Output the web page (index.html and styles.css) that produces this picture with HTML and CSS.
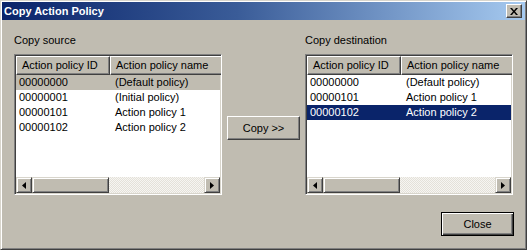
FILE: index.html
```html
<!DOCTYPE html>
<html lang="en">
<head>
  <meta charset="UTF-8" />
  <title>Copy Action Policy</title>
  <link rel="stylesheet" href="styles.css">
</head>
<body>
  <div class="window">
    <div class="titlebar">
      <span class="title">Copy Action Policy</span>
      <button class="title-close" aria-label="Close">
        <svg width="8" height="7" viewBox="0 0 8 7"><path d="M0 0h2l2 2.5 2-2.5h2l-3 3.5 3 3.5h-2l-2-2.5-2 2.5h-2l3-3.5z" fill="#000"/></svg>
      </button>
    </div>

    <div class="dialog-body">
      <div class="panes">
        <div class="pane-label">Copy source</div>
        <div></div>
        <div class="pane-label">Copy destination</div>

        <div class="listview">
          <div class="lv-header">
            <div class="lv-head lv-col-id">Action policy ID</div>
            <div class="lv-head lv-col-name">Action policy name</div>
          </div>
          <div class="lv-rows">
            <div class="lv-row inactive-sel"><span class="lv-col-id">00000000</span><span class="lv-col-name">(Default policy)</span></div>
            <div class="lv-row"><span class="lv-col-id">00000001</span><span class="lv-col-name">(Initial policy)</span></div>
            <div class="lv-row"><span class="lv-col-id">00000101</span><span class="lv-col-name">Action policy 1</span></div>
            <div class="lv-row"><span class="lv-col-id">00000102</span><span class="lv-col-name">Action policy 2</span></div>
          </div>
          <div class="hscroll">
            <div class="sb-btn"><svg width="4" height="7" viewBox="0 0 4 7"><path d="M4 0v7L0 3.5z" fill="#000"/></svg></div>
            <div class="sb-thumb"></div>
            <div class="sb-track"></div>
            <div class="sb-btn"><svg width="4" height="7" viewBox="0 0 4 7"><path d="M0 0v7l4-3.5z" fill="#000"/></svg></div>
          </div>
        </div>

        <button class="btn btn-copy">Copy &gt;&gt;</button>

        <div class="listview">
          <div class="lv-header">
            <div class="lv-head lv-col-id">Action policy ID</div>
            <div class="lv-head lv-col-name">Action policy name</div>
          </div>
          <div class="lv-rows">
            <div class="lv-row"><span class="lv-col-id">00000000</span><span class="lv-col-name">(Default policy)</span></div>
            <div class="lv-row"><span class="lv-col-id">00000101</span><span class="lv-col-name">Action policy 1</span></div>
            <div class="lv-row selected"><span class="lv-col-id">00000102</span><span class="lv-col-name">Action policy 2</span></div>
          </div>
          <div class="hscroll">
            <div class="sb-btn"><svg width="4" height="7" viewBox="0 0 4 7"><path d="M4 0v7L0 3.5z" fill="#000"/></svg></div>
            <div class="sb-thumb"></div>
            <div class="sb-track"></div>
            <div class="sb-btn"><svg width="4" height="7" viewBox="0 0 4 7"><path d="M0 0v7l4-3.5z" fill="#000"/></svg></div>
          </div>
        </div>
      </div>

      <div class="footer">
        <button class="btn btn-default">Close</button>
      </div>
    </div>
  </div>
</body>
</html>
```

FILE: styles.css
```css
* {
  box-sizing: border-box;
}

body {
  margin: 0;
  background: #c0bcb1;
  font-family: "Liberation Sans", Arial, sans-serif;
  font-size: 11px;
  color: #000;
}

.window {
  width: 527px;
  height: 250px;
  padding: 1px;
  background: #c0bcb1;
  border: 1px solid;
  border-color: #d8d5cc #404040 #404040 #d8d5cc;
  box-shadow: inset 1px 1px #fff, inset -1px -1px #808080;
  display: flex;
  flex-direction: column;
}

/* title bar */
.titlebar {
  height: 18px;
  display: flex;
  align-items: center;
  padding-left: 2px;
  background: linear-gradient(to right, #0a246a, #3a5c98 45%, #a6caf0);
}

.title {
  flex: 1;
  color: #fff;
  font-weight: bold;
  font-size: 11px;
}

.title-close {
  width: 16px;
  height: 14px;
  margin-right: 3px;
  padding: 0;
  display: flex;
  align-items: center;
  justify-content: center;
  background: #c0bcb1;
  border: 1px solid;
  border-color: #fff #404040 #404040 #fff;
  box-shadow: inset -1px -1px #808080;
}

/* dialog content */
.dialog-body {
  flex: 1;
  padding: 14px 12px 0 12px;
}

.panes {
  display: grid;
  grid-template-columns: 208px 73px 208px;
  grid-template-rows: 13px 141px;
  column-gap: 5px;
  row-gap: 7px;
}

.pane-label {
  line-height: 13px;
}

.listview {
  display: flex;
  flex-direction: column;
  background: #fff;
  border: 1px solid;
  border-color: #808080 #fff #fff #808080;
  box-shadow: inset 1px 1px #404040, inset -1px -1px #d8d5cc;
  padding: 1px;
  overflow: hidden;
}

.lv-header {
  display: flex;
  height: 19px;
  flex-shrink: 0;
}

.lv-head {
  flex-shrink: 0;
  background: #c0bcb1;
  border: 1px solid;
  border-color: #fff #404040 #404040 #fff;
  box-shadow: inset -1px -1px #808080;
  line-height: 16px;
  padding-left: 5px;
  white-space: nowrap;
}

.lv-head.lv-col-name {
  width: 120px;
}

.lv-col-id {
  width: 94px;
  flex-shrink: 0;
}

.lv-rows {
  flex: 1;
}

.lv-row {
  display: flex;
  height: 15px;
  line-height: 15px;
  white-space: nowrap;
}

.lv-row .lv-col-id {
  padding-left: 3px;
}

.lv-row .lv-col-name {
  padding-left: 5px;
}

.lv-row.inactive-sel {
  background: #c0bcb1;
}

.lv-row.selected {
  background: #0a246a;
  color: #fff;
}

/* horizontal scroll bar */
.hscroll {
  display: flex;
  height: 16px;
  flex-shrink: 0;
}

.sb-btn,
.sb-thumb {
  background: #c0bcb1;
  border: 1px solid;
  border-color: #d8d5cc #404040 #404040 #d8d5cc;
  box-shadow: inset 1px 1px #fff, inset -1px -1px #808080;
}

.sb-btn {
  width: 16px;
  display: flex;
  align-items: center;
  justify-content: center;
}

.sb-thumb {
  width: 77px;
}

.sb-track {
  flex: 1;
  background-color: #fff;
  background-image: repeating-conic-gradient(#e4e1d9 0 25%, #f6f5f2 0 50%);
  background-size: 2px 2px;
}

/* buttons */
.btn {
  width: 73px;
  height: 24px;
  padding: 0;
  font-family: inherit;
  font-size: 11px;
  color: #000;
  background: #c0bcb1;
  border: 1px solid;
  border-color: #fff #404040 #404040 #fff;
  box-shadow: inset -1px -1px #808080;
}

.btn-copy {
  align-self: start;
  margin-top: 62px;
}

.btn-default {
  border-color: #000;
  box-shadow: inset 1px 1px #fff, inset -1px -1px #404040, inset -2px -2px #808080;
}

.footer {
  display: flex;
  justify-content: flex-end;
  margin-top: 17px;
  margin-right: -1px;
}
```
